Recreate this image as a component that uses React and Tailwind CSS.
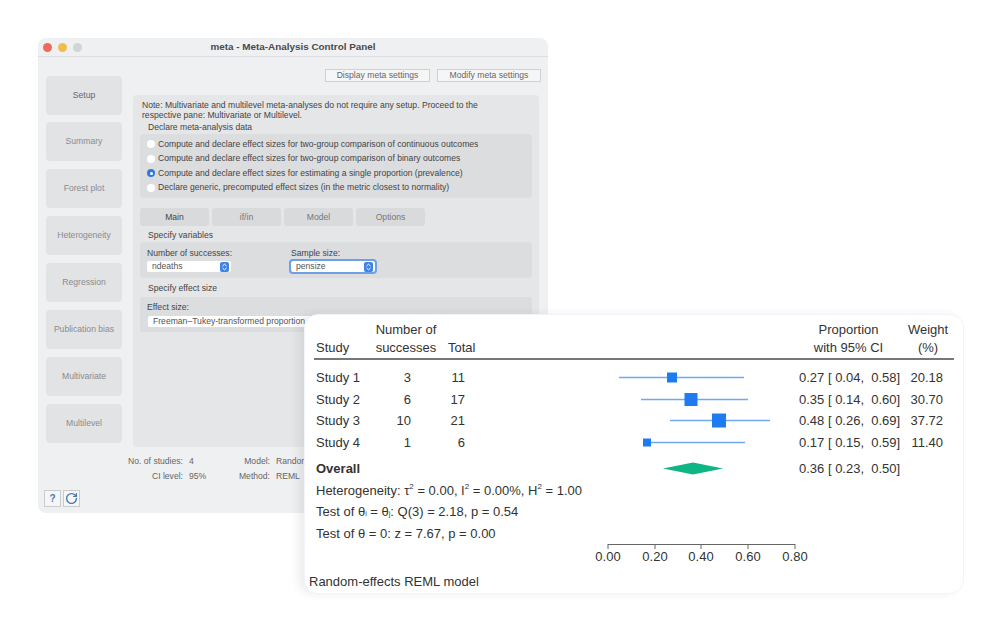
import React from 'react'
import { RotateCw } from 'lucide-react'

const navItems = ['Setup', 'Summary', 'Forest plot', 'Heterogeneity', 'Regression', 'Publication bias', 'Multivariate', 'Multilevel']

const radios = [
  'Compute and declare effect sizes for two-group comparison of continuous outcomes',
  'Compute and declare effect sizes for two-group comparison of binary outcomes',
  'Compute and declare effect sizes for estimating a single proportion (prevalence)',
  'Declare generic, precomputed effect sizes (in the metric closest to normality)',
]

const studies = [
  { name: 'Study 1', n: '3', total: '11', lo: 619, hi: 744, mid: 672, size: 10, ci: '0.27 [ 0.04,  0.58]', weight: '20.18' },
  { name: 'Study 2', n: '6', total: '17', lo: 641, hi: 748, mid: 691, size: 13, ci: '0.35 [ 0.14,  0.60]', weight: '30.70' },
  { name: 'Study 3', n: '10', total: '21', lo: 670, hi: 770, mid: 719, size: 14, ci: '0.48 [ 0.26,  0.69]', weight: '37.72' },
  { name: 'Study 4', n: '1', total: '6', lo: 643, hi: 745, mid: 647, size: 8, ci: '0.17 [ 0.15,  0.59]', weight: '11.40' },
]

const ticks = [
  { x: 28, label: '0.00' },
  { x: 75, label: '0.20' },
  { x: 121, label: '0.40' },
  { x: 168, label: '0.60' },
  { x: 215, label: '0.80' },
]

function Stepper() {
  return (
    <span className="flex h-[10px] w-[9px] items-center justify-center rounded-[2px] bg-[#3f83e8]">
      <svg width="7" height="8" viewBox="0 0 7 8" fill="none" stroke="white" strokeWidth="1">
        <path d="M1.5 3 3.5 1.2 5.5 3M1.5 5 3.5 6.8 5.5 5" />
      </svg>
    </span>
  )
}

function Select({ value, focused }) {
  return (
    <div className={`flex h-[11px] w-[84px] items-center justify-between rounded-[2px] bg-white pl-[5px] pr-[2px] text-[#555] ${focused ? 'outline-2 outline-[#6f9fe6]' : ''}`}>
      <span>{value}</span>
      <Stepper />
    </div>
  )
}

function Radio({ label, checked }) {
  return (
    <div className="flex h-[14.5px] items-center gap-[3px]">
      {checked ? (
        <span className="flex h-[8px] w-[8px] items-center justify-center rounded-full bg-[#2f78e6]">
          <span className="h-[3px] w-[3px] rounded-full bg-white" />
        </span>
      ) : (
        <span className="h-[8px] w-[8px] rounded-full bg-white" />
      )}
      <span>{label}</span>
    </div>
  )
}

function ControlPanel() {
  return (
    <div className="absolute left-[38px] top-[38px] flex h-[475px] w-[510px] flex-col rounded-[8px] bg-[#eff0f2] font-['Liberation_Sans',sans-serif] text-[8.6px] text-[#555]">
      <div className="relative flex h-[19px] shrink-0 items-center justify-center border-b border-[#dddee0] text-[9.9px] font-bold text-[#4a4a4a]">
        <div className="absolute left-[5px] top-[5px] flex gap-[6px]">
          <span className="h-[9px] w-[9px] rounded-full bg-[#ea6a5e]" />
          <span className="h-[9px] w-[9px] rounded-full bg-[#f2bc4c]" />
          <span className="h-[9px] w-[9px] rounded-full bg-[#d3d4d6]" />
        </div>
        meta - Meta-Analysis Control Panel
      </div>

      <div className="flex flex-1">
        <div className="flex w-[84px] shrink-0 flex-col gap-[7.9px] pl-[8px] pt-[18.5px]">
          {navItems.map((item, i) => (
            <div key={item} className={`flex h-[39px] w-[76px] items-center justify-center rounded-[4px] bg-[#e2e3e5] ${i === 0 ? 'text-[#666]' : 'text-[#8a8b8d]'}`}>
              {item}
            </div>
          ))}
        </div>

        <div className="ml-[6px] flex flex-1 flex-col">
          <div className="flex justify-end gap-[7px] pt-[12px] pr-[7px] text-[#666]">
            <div className="flex h-[13px] w-[105px] items-center justify-center border border-[#cfd0d2] bg-[#f6f6f7]">Display meta settings</div>
            <div className="flex h-[13px] w-[104px] items-center justify-center border border-[#cfd0d2] bg-[#f6f6f7]">Modify meta settings</div>
          </div>

          <div className="ml-[5px] mt-[13px] flex h-[352px] w-[406px] flex-col rounded-[4px] bg-[#e5e6e8] px-[7px] text-[#444]">
            <p className="mt-[5px] pl-[2px] leading-[10px]">
              Note: Multivariate and multilevel meta-analyses do not require any setup. Proceed to the
              <br />
              respective pane: Multivariate or Multilevel.
            </p>
            <div className="mt-[1px] h-[13px] pl-[8px] leading-[13px]">Declare meta-analysis data</div>
            <div className="flex h-[64px] flex-col justify-center rounded-[4px] bg-[#dcdddf] pl-[7px]">
              {radios.map((label, i) => (
                <Radio key={label} label={label} checked={i === 2} />
              ))}
            </div>

            <div className="mt-[10px] flex gap-[3px]">
              {['Main', 'if/in', 'Model', 'Options'].map((tab, i) => (
                <div key={tab} className={`flex h-[18px] w-[69px] items-center justify-center rounded-[3px] bg-[#d9dadc] ${i === 0 ? 'text-[#444]' : 'text-[#777]'}`}>
                  {tab}
                </div>
              ))}
            </div>

            <div className="mt-[3px] h-[13px] pl-[8px] leading-[13px]">Specify variables</div>
            <div className="flex h-[36px] gap-[59px] rounded-[3px] bg-[#dcdddf] pl-[7px] pt-[5px]">
              <div className="flex flex-col gap-[2px]">
                <span className="leading-[12px]">Number of successes:</span>
                <Select value="ndeaths" />
              </div>
              <div className="flex flex-col gap-[2px]">
                <span className="leading-[12px]">Sample size:</span>
                <Select value="pensize" focused />
              </div>
            </div>

            <div className="mt-[4px] h-[13px] pl-[8px] leading-[13px]">Specify effect size</div>
            <div className="mt-[2px] h-[35px] rounded-[3px] bg-[#dcdddf] pl-[8px] pt-[4px]">
              <div className="ml-[-1px] leading-[12px]">Effect size:</div>
              <div className="mt-[3px] flex h-[11px] w-[240px] items-center rounded-[2px] bg-white pl-[5px] text-[#555]">
                Freeman–Tukey-transformed proportion
              </div>
            </div>
          </div>

          <div className="mt-[9px] grid grid-cols-[55px_15px_60px_auto] gap-x-[6px] gap-y-[4px] leading-[11px] text-[#666]">
            <span className="text-right">No. of studies:</span>
            <span>4</span>
            <span className="text-right">Model:</span>
            <span>Random</span>
            <span className="text-right">CI level:</span>
            <span>95%</span>
            <span className="text-right">Method:</span>
            <span>REML</span>
          </div>
        </div>
      </div>

      <div className="flex gap-[2px] pb-[6px] pl-[6px]">
        <div className="flex h-[17px] w-[17px] items-center justify-center border border-[#c9cbce] bg-[#f6f6f7] text-[10px] font-bold text-[#4b78ad]">?</div>
        <div className="flex h-[17px] w-[17px] items-center justify-center border border-[#c9cbce] bg-[#f6f6f7] text-[#4b78ad]">
          <RotateCw size={13} strokeWidth={2.5} />
        </div>
      </div>
    </div>
  )
}

function StudyRow({ study }) {
  return (
    <div className="flex h-[21.6px] items-center">
      <span className="w-[59px]">{study.name}</span>
      <span className="w-[36px] text-right">{study.n}</span>
      <span className="w-[54px] text-right">{study.total}</span>
      <svg width="334" height="21" className="shrink-0">
        <line x1={study.lo - 465} x2={study.hi - 465} y1="10.5" y2="10.5" stroke="#6fa9f2" strokeWidth="1.4" />
        <rect x={study.mid - 465 - study.size / 2} y={10.5 - study.size / 2} width={study.size} height={study.size} fill="#1f7bf2" />
      </svg>
      <span className="w-[100px] whitespace-pre">{study.ci}</span>
      <span className="w-[44px] text-right">{study.weight}</span>
    </div>
  )
}

function ForestPlot() {
  return (
    <div className="absolute left-[304px] top-[314px] flex h-[280px] w-[660px] flex-col rounded-[14px] border border-[#f1f4fb] bg-white pl-[9px] pt-[6px] font-['Liberation_Sans',sans-serif] text-[13px] text-[#333] shadow-[-6px_0_10px_rgba(0,0,0,0.07)]">
      <div className="w-[640px] border-b-2 border-[#777] pb-[1px] pl-[2px]">
        <div className="flex items-end leading-[18px]">
          <span className="w-[59px]">Study</span>
          <span className="w-[62px] text-center">
            Number of
            <br />
            successes
          </span>
          <span className="ml-[11px] w-[348px]">Total</span>
          <span className="ml-[-2px] w-[109px] text-center">
            Proportion
            <br />
            with 95% CI
          </span>
          <span className="w-[50px] text-center">
            Weight
            <br />
            (%)
          </span>
        </div>
      </div>

      <div className="mt-[7px] pl-[2px]">
        {studies.map((study) => (
          <StudyRow key={study.name} study={study} />
        ))}

        <div className="mt-[4.5px] flex h-[21.6px] items-center">
          <span className="w-[149px] font-bold">Overall</span>
          <svg width="334" height="21" className="shrink-0">
            <polygon points="198,10.5 228,4.5 258,10.5 228,16.5" fill="#0fb585" />
          </svg>
          <span className="whitespace-pre">0.36 [ 0.23,  0.50]</span>
        </div>

        <div className="mt-[0.5px] flex h-[21.5px] items-center whitespace-pre">
          Heterogeneity: τ<sup className="text-[8px]">2</sup> = 0.00, I<sup className="text-[8px]">2</sup> = 0.00%, H<sup className="text-[8px]">2</sup> = 1.00
        </div>
        <div className="flex h-[21.5px] items-center whitespace-pre">
          Test of θ<sub className="text-[7px]">i</sub> = θ<sub className="text-[7px]">j</sub>: Q(3) = 2.18, p = 0.54
        </div>
        <div className="flex h-[21.5px] items-center whitespace-pre">Test of θ = 0: z = 7.67, p = 0.00</div>
      </div>

      <svg width="240" height="24" className="ml-[266px] mt-[-3px] shrink-0">
        <path d="M28 3.5H215" stroke="#666" strokeWidth="1" fill="none" />
        {ticks.map((tick) => (
          <g key={tick.label}>
            <line x1={tick.x} x2={tick.x} y1="3" y2="8" stroke="#666" strokeWidth="1" />
            <text x={tick.x} y="20" textAnchor="middle" fontSize="13" fill="#333">{tick.label}</text>
          </g>
        ))}
      </svg>

      <div className="ml-[-5px] mt-[10px] leading-[14px]">Random-effects REML model</div>
    </div>
  )
}

export default function App() {
  return (
    <div className="relative h-[632px] w-[1002px] overflow-hidden bg-white">
      <ControlPanel />
      <ForestPlot />
    </div>
  )
}
